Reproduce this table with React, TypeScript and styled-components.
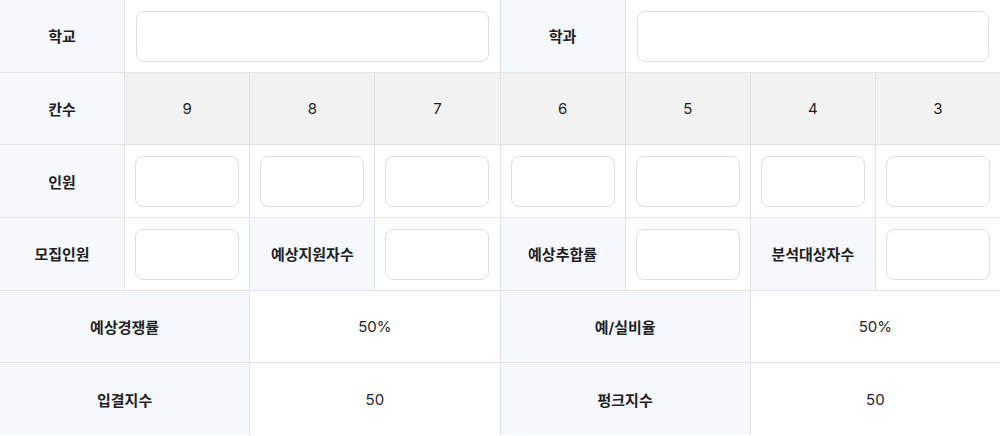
import React, { FC } from 'react';
import styled, { createGlobalStyle } from 'styled-components';

const GlobalStyle = createGlobalStyle`
	html, body {
		margin: 0;
		padding: 0;
		background: #ffffff;
	}
	body {
		font-family: Inter, 'Noto Sans CJK KR', sans-serif;
		color: #1f1f1f;
	}
`;

const Sheet = styled.div`
	display: grid;
	grid-template-columns: repeat(8, minmax(0, 1fr));
	grid-auto-rows: 71.7px;
	gap: 1px;
	width: 1000px;
	background: #e2e2e2;
`;

const Cell = styled.div<{ $span?: number; $tone?: 'label' | 'gray' | 'plain' }>`
	grid-column: span ${(p) => p.$span ?? 1};
	display: flex;
	align-items: center;
	justify-content: center;
	min-width: 0;
	white-space: nowrap;
	font-size: 15px;
	background: ${(p) => (p.$tone === 'label' ? '#f5f8fd' : p.$tone === 'gray' ? '#f2f2f2' : '#ffffff')};
	font-weight: ${(p) => (p.$tone === 'label' ? 600 : 400)};
`;

const InputCell = styled.div<{ $span?: number }>`
	grid-column: span ${(p) => p.$span ?? 1};
	display: flex;
	align-items: stretch;
	justify-content: center;
	min-width: 0;
	box-sizing: border-box;
	padding: 11px 11px 10px 11px;
	background: #ffffff;
`;

const Field = styled.input<{ $wide?: boolean }>`
	flex: ${(p) => (p.$wide ? 1 : '0 0 104px')};
	width: ${(p) => (p.$wide ? '100%' : '104px')};
	min-width: 0;
	box-sizing: border-box;
	border: 1px solid #dddddd;
	border-radius: 8px;
	background: #ffffff;
	outline: none;
	font-size: 15px;
	font-family: inherit;
	padding: 0 12px;
`;

const counts = ['9', '8', '7', '6', '5', '4', '3'];

const pairs = ['예상지원자수', '예상추합률', '분석대상자수'];

const App: FC = () => {
	return (
		<>
			<GlobalStyle />
			<Sheet>
				<Cell $tone="label">학교</Cell>
				<InputCell $span={3}>
					<Field $wide />
				</InputCell>
				<Cell $tone="label">학과</Cell>
				<InputCell $span={3}>
					<Field $wide />
				</InputCell>

				<Cell $tone="label">칸수</Cell>
				{counts.map((c) => (
					<Cell key={c} $tone="gray">
						{c}
					</Cell>
				))}

				<Cell $tone="label">인원</Cell>
				{counts.map((c) => (
					<InputCell key={'in' + c}>
						<Field />
					</InputCell>
				))}

				<Cell $tone="label">모집인원</Cell>
				<InputCell>
					<Field />
				</InputCell>
				{pairs.map((label) => (
					<React.Fragment key={label}>
						<Cell $tone="label">{label}</Cell>
						<InputCell>
							<Field />
						</InputCell>
					</React.Fragment>
				))}

				<Cell $tone="label" $span={2}>
					예상경쟁률
				</Cell>
				<Cell $span={2}>50%</Cell>
				<Cell $tone="label" $span={2}>
					예/실비율
				</Cell>
				<Cell $span={2}>50%</Cell>

				<Cell $tone="label" $span={2}>
					입결지수
				</Cell>
				<Cell $span={2}>50</Cell>
				<Cell $tone="label" $span={2}>
					펑크지수
				</Cell>
				<Cell $span={2}>50</Cell>
			</Sheet>
		</>
	);
};

export default App;
